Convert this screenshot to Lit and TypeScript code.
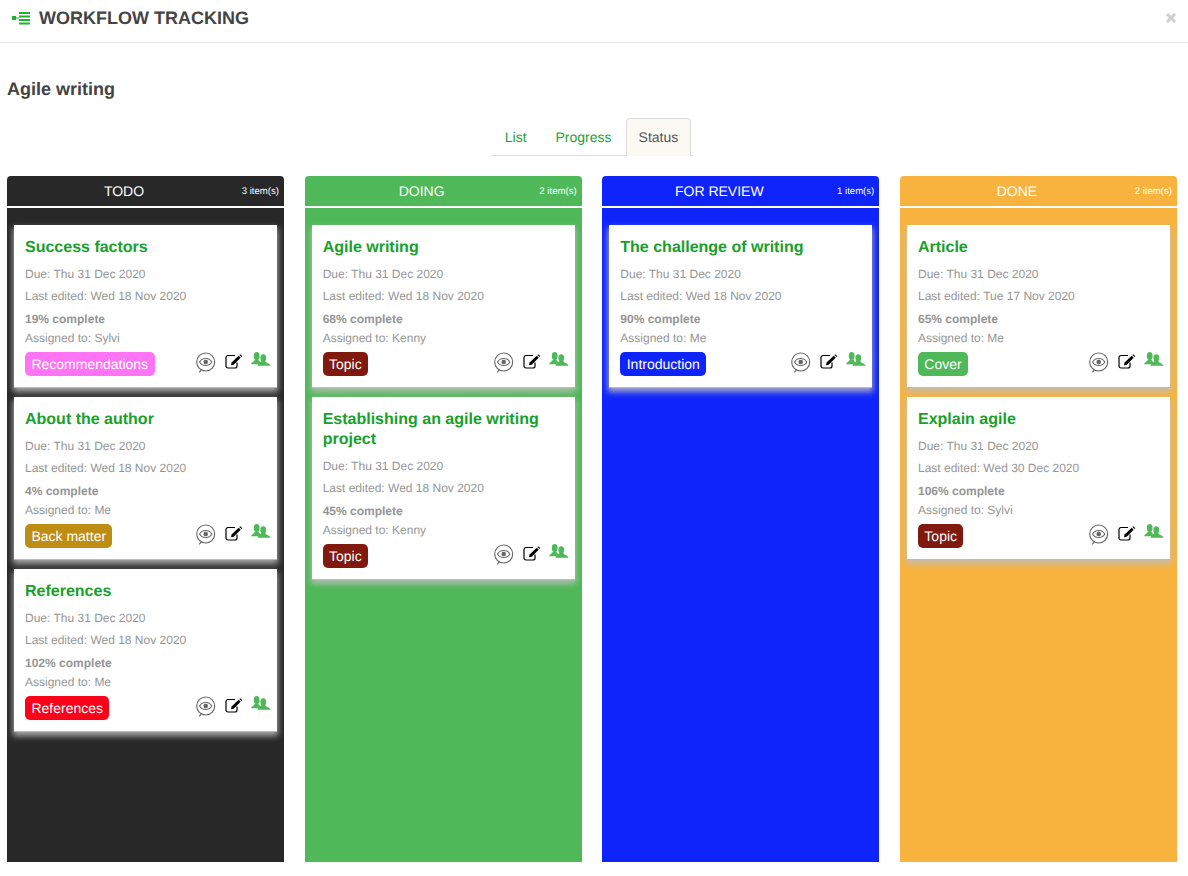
import { LitElement, html, css, svg } from "lit";
import { customElement } from "lit/decorators.js";

interface Card { title: string; edited: string; pct: string; who: string; tag: string; color: string; }
interface Col { name: string; color: string; items: Card[]; }

const cols: Col[] = [
  { name: "TODO", color: "#282828", items: [
    { title: "Success factors", edited: "Wed 18 Nov 2020", pct: "19%", who: "Sylvi", tag: "Recommendations", color: "#ff73f5" },
    { title: "About the author", edited: "Wed 18 Nov 2020", pct: "4%", who: "Me", tag: "Back matter", color: "#bd8d14" },
    { title: "References", edited: "Wed 18 Nov 2020", pct: "102%", who: "Me", tag: "References", color: "#fc0019" },
  ]},
  { name: "DOING", color: "#4fb858", items: [
    { title: "Agile writing", edited: "Wed 18 Nov 2020", pct: "68%", who: "Kenny", tag: "Topic", color: "#80190e" },
    { title: "Establishing an agile writing project", edited: "Wed 18 Nov 2020", pct: "45%", who: "Kenny", tag: "Topic", color: "#80190e" },
  ]},
  { name: "FOR REVIEW", color: "#0f24fb", items: [
    { title: "The challenge of writing", edited: "Wed 18 Nov 2020", pct: "90%", who: "Me", tag: "Introduction", color: "#0f24fb" },
  ]},
  { name: "DONE", color: "#f8b33f", items: [
    { title: "Article", edited: "Tue 17 Nov 2020", pct: "65%", who: "Me", tag: "Cover", color: "#4fb858" },
    { title: "Explain agile", edited: "Wed 30 Dec 2020", pct: "106%", who: "Sylvi", tag: "Topic", color: "#80190e" },
  ]},
];

const eye = svg`<svg class="ic" width="21" height="21" viewBox="0 0 21 21" fill="none" stroke="#666"><circle cx="10.700" cy="10" r="9" stroke-width="1.100"/><path d="M4.300 20.300 L6.500 17.300" stroke-width="1.100"/><path d="M4.600 10 C7 5.300 14.400 5.300 16.800 10 C14.400 14.700 7 14.700 4.600 10Z" stroke-width="1.100"/><circle cx="10.700" cy="10" r="2.300" fill="#666" stroke="none"/></svg>`;
const edit = svg`<svg class="ic" width="18" height="15" viewBox="0 0 18 15" fill="none"><path d="M12 8.500V12a2 2 0 0 1-2 2H3a2 2 0 0 1-2-2V3.500a2 2 0 0 1 2-2h7" stroke="#000" stroke-width="1.200"/><path d="M6 11.300 L6.600 8.600 L13.700 1.700 L15.700 3.700 L8.700 10.700Z" fill="#000"/><path d="M14.400 1 L15.200 .2 L17.300 2.200 L16.500 3" fill="#000"/></svg>`;
const users = svg`<svg class="ic" width="20" height="14" viewBox="0 0 20 14" fill="#4fb858"><ellipse cx="5.700" cy="4" rx="2.900" ry="4"/><path d="M0 12.300 C.4 10 3 9.800 4 7.500 H7.400 C8 9.300 9.300 10 10.500 10.800 L8 12.300Z"/><ellipse cx="12.300" cy="6" rx="2.900" ry="3.700"/><path d="M6.400 13.700 C6.800 11.400 9.500 11.300 10.300 9 H14.300 C15.100 11.300 19 11.400 19.500 13.700Z"/></svg>`;

@customElement("app-root")
export class AppRoot extends LitElement {
  static styles = css`
    :host { display: block; height: 876px; overflow: hidden; background: #fff; font-family: "Liberation Sans", Arial, sans-serif; text-rendering: geometricPrecision; }
    .top { box-sizing: border-box; border-bottom: 1px solid #e9e9e9; display: flex; align-items: center; padding: 0 12px 7px; height: 43px; }
    .logo { margin-right: 8px; flex: none; }
    .top h1 { margin: 0; flex: 1; font-size: 18px; line-height: 24px; font-weight: 700; color: #444; }
    .close { width: 16px; flex: none; margin-right: -3px; }
    h2 { margin: 34px 0 0 7px; font-size: 18px; line-height: 24px; font-weight: 700; color: #444; }
    .tabs { display: flex; justify-content: center; margin-top: 17px; height: 38px; padding-right: 4px; }
    .tabbar { display: flex; border-bottom: 1px solid #ddd; box-sizing: border-box; height: 38px; padding-right: 2px; }
    .tab { font-size: 14px; line-height: 38px; color: #21a236; padding: 0 15px 0 14px; }
    .tab.on { color: #555; background: #fbf9f4; border: 1px solid #ddd; border-bottom: none; border-radius: 4px 4px 0 0; padding: 0 12px; margin-left: -1px; line-height: 36px; height: 38px; box-sizing: border-box; }
    .board { display: grid; grid-template-columns: repeat(4, 277px); justify-content: space-between; margin: 20px 11px 0 7px; }
    .col { height: 686px; border-radius: 4px 4px 0 0; color: #fff; }
    .head { height: 30px; border-bottom: 2px solid #fff; display: flex; font-size: 14px; line-height: 30px; }
    .name { flex: 1; text-align: center; }
    .count { flex: none; width: 43px; box-sizing: border-box; padding-right: 5px; text-align: right; white-space: nowrap; font-size: 9.600px; line-height: 31px; }
    .list { display: flex; flex-direction: column; gap: 10px; padding: 17px 7px 0; }
    .card { background: #fff; padding: 13px 6px 11px 11px; box-shadow: 0 1px 0 #bbb, 0 4px 6px 1px rgba(190,190,190,.85); box-sizing: border-box; }
    .title { font-size: 16px; line-height: 20px; font-weight: 700; color: #17a02a; }
    .line { font-size: 12px; line-height: 16px; color: #959595; margin-top: 6px; }
    .title + .line { margin-top: 8px; }
    .pct { font-weight: 700; margin-top: 7px; }
    .assn { margin-top: 3px; }
    .foot { display: flex; align-items: flex-start; margin-top: 6px; height: 24px; }
    .tag { font-size: 14px; line-height: 24px; padding: 0 6.400px; border-radius: 5px; color: #fff; }
    .icons { margin-left: auto; display: flex; align-items: flex-start; }
    .ic { display: block; flex: none; }
    .ic:nth-child(2) { margin: 2px 0 0 9px; }
    .ic:nth-child(3) { margin: 0 0 0 8px; }
  `;

  render() {
    return html`
      <div class="top">
        <svg class="logo" width="19" height="14" viewBox="0 0 19 14" fill="#21b02f">
          <rect x="0" y="5" width="4" height="4"/><rect x="4" y="6.500" width="3" height="1"/>
          <rect x="7" y="1" width="11" height="2"/><rect x="7" y="4.500" width="11" height="2"/><rect x="7" y="8" width="11" height="2"/><rect x="7" y="11.500" width="11" height="2"/>
        </svg>
        <h1>WORKFLOW TRACKING</h1>
        <svg class="close" height="12" viewBox="0 0 12 12" stroke="#cfcfcf" stroke-width="3"><path d="M2 2l8 8M10 2l-8 8"/></svg>
      </div>
      <h2>Agile writing</h2>
      <div class="tabs"><div class="tabbar">
        <div class="tab">List</div><div class="tab">Progress</div><div class="tab on">Status</div>
      </div></div>
      <div class="board">
        ${cols.map((c) => html`
          <div class="col" style="background:${c.color}">
            <div class="head"><span class="name">${c.name}</span><span class="count">${c.items.length} item(s)</span></div>
            <div class="list">
              ${c.items.map((i) => html`
                <div class="card">
                  <div class="title">${i.title}</div>
                  <div class="line">Due: Thu 31 Dec 2020</div>
                  <div class="line">Last edited: ${i.edited}</div>
                  <div class="line pct">${i.pct} complete</div>
                  <div class="line assn">Assigned to: ${i.who}</div>
                  <div class="foot">
                    <div class="tag" style="background:${i.color}">${i.tag}</div>
                    <div class="icons">${eye}${edit}${users}</div>
                  </div>
                </div>`)}
            </div>
          </div>`)}
      </div>
    `;
  }
}
